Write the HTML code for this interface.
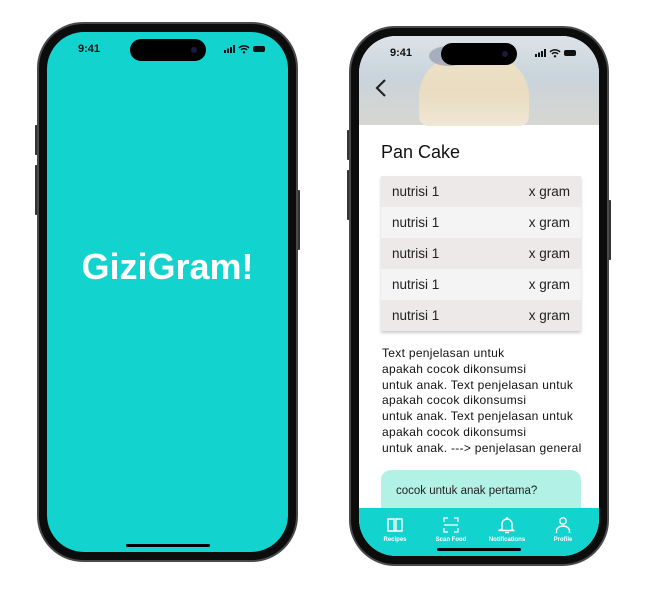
<!DOCTYPE html>
<html><head><style>
*{margin:0;padding:0;box-sizing:border-box}
body{width:654px;height:589px;background:#fff;position:relative;overflow:hidden;font-family:"Liberation Sans",sans-serif}
.ph{position:absolute;border-radius:46px;background:#0c0c0c;border:2px solid #4a4a4a;padding:8px}
.scr{position:relative;width:100%;height:100%;border-radius:37px;overflow:hidden}
.isl{position:absolute;top:7px;left:50%;margin-left:-38px;width:76px;height:22px;background:#000;border-radius:12px}
.isl:after{content:"";position:absolute;right:9px;top:8px;width:6px;height:6px;border-radius:50%;background:#1a1a40}
.time{position:absolute;top:11px;left:31px;font-size:11px;font-weight:bold;color:#111}
.st{position:absolute;top:12px;right:22px;width:42px;height:10px}
.home{position:absolute;bottom:5px;left:50%;margin-left:-42px;width:84px;height:3px;background:#000;border-radius:2px}
.btn{position:absolute;background:#333;width:3px;border-radius:1px}
.row{height:31px;display:flex;justify-content:space-between;align-items:center;padding:0 11px;font-size:13.5px;color:#222}
.nav{position:absolute;left:0;right:0;bottom:0;height:48px;background:#12D3CE;display:flex;justify-content:space-around;padding:8px 8px 0}
.it{display:flex;flex-direction:column;align-items:center;color:#fff;font-size:6px;font-weight:bold;width:52px}
.it svg{width:18px;height:18px;margin-bottom:3px}
</style></head><body>
<div class="btn" style="left:35px;top:125px;height:30px"></div>
<div class="btn" style="left:35px;top:165px;height:50px"></div>
<div class="btn" style="left:297px;top:190px;height:60px"></div>
<div class="ph" style="left:37px;top:22px;width:261px;height:540px">
 <div class="scr" style="background:#12D3CE">
  <div class="isl"></div>
  <div class="time">9:41</div>
  <svg class="st" viewBox="0 0 42 10"><rect x="0" y="6" width="2" height="3" fill="#111"/><rect x="3" y="4.5" width="2" height="4.5" fill="#111"/><rect x="6" y="3" width="2" height="6" fill="#111"/><rect x="9" y="1" width="2" height="8" fill="#111"/><path d="M15 4 A7 7 0 0 1 25 4 M17 6 A4 4 0 0 1 23 6" stroke="#111" stroke-width="1.5" fill="none"/><circle cx="20" cy="8.3" r="1.2" fill="#111"/><rect x="29" y="2" width="12" height="6" rx="2" fill="#111"/></svg>
  <div style="position:absolute;top:214px;left:0;right:0;text-align:center;color:#fff;font-size:36px;font-weight:bold">GiziGram!</div>
  <div class="home"></div>
 </div>
</div>
<div class="btn" style="left:347px;top:130px;height:30px"></div>
<div class="btn" style="left:347px;top:170px;height:50px"></div>
<div class="btn" style="left:608px;top:200px;height:60px"></div>
<div class="ph" style="left:349px;top:26px;width:260px;height:540px">
 <div class="scr" style="background:#fff">
  <div style="position:absolute;top:0;left:0;right:0;height:89px;background:linear-gradient(180deg,#dde3e8 0%,#c9d4dc 45%,#d7d6d0 100%)">
   <div style="position:absolute;left:60px;top:20px;width:110px;height:70px;border-radius:40px 40px 10px 10px;background:linear-gradient(180deg,#ece1c8,#e9dcc0 50%,#efe6d4)"></div>
   <div style="position:absolute;left:70px;top:10px;width:40px;height:20px;border-radius:50%;background:#8890a8;opacity:.6"></div>
  </div>
  <svg style="position:absolute;left:16px;top:42px" width="12" height="20" viewBox="0 0 12 20"><path d="M10 2 L2 10 L10 18" stroke="#222" stroke-width="2.2" fill="none"/></svg>
  <div class="isl"></div>
  <div class="time">9:41</div>
  <svg class="st" viewBox="0 0 42 10"><rect x="0" y="6" width="2" height="3" fill="#111"/><rect x="3" y="4.5" width="2" height="4.5" fill="#111"/><rect x="6" y="3" width="2" height="6" fill="#111"/><rect x="9" y="1" width="2" height="8" fill="#111"/><path d="M15 4 A7 7 0 0 1 25 4 M17 6 A4 4 0 0 1 23 6" stroke="#111" stroke-width="1.5" fill="none"/><circle cx="20" cy="8.3" r="1.2" fill="#111"/><rect x="29" y="2" width="12" height="6" rx="2" fill="#111"/></svg>
  <div style="position:absolute;left:22px;top:106px;font-size:18px;color:#111">Pan Cake</div>
  <div style="position:absolute;left:22px;top:140px;width:200px;box-shadow:0 2px 3px rgba(0,0,0,.2)">
   <div class="row" style="background:#ECE9E8"><span>nutrisi 1</span><span>x gram</span></div>
   <div class="row" style="background:#F4F4F4"><span>nutrisi 1</span><span>x gram</span></div>
   <div class="row" style="background:#ECE9E8"><span>nutrisi 1</span><span>x gram</span></div>
   <div class="row" style="background:#F4F4F4"><span>nutrisi 1</span><span>x gram</span></div>
   <div class="row" style="background:#ECE9E8"><span>nutrisi 1</span><span>x gram</span></div>
  </div>
  <div style="position:absolute;left:23px;top:310px;width:230px;font-size:12px;letter-spacing:0.3px;line-height:15.8px;color:#111">Text penjelasan untuk<br>apakah cocok dikonsumsi<br>untuk anak. Text penjelasan untuk<br>apakah cocok dikonsumsi<br>untuk anak. Text penjelasan untuk<br>apakah cocok dikonsumsi<br>untuk anak. ---&gt; penjelasan general</div>
  <div style="position:absolute;left:22px;top:434px;width:200px;height:60px;background:#B2F2E6;border-radius:10px;padding:15px 15px;font-size:11.5px;color:#222">cocok untuk anak pertama?</div>
  <div class="nav">
   <div class="it"><svg viewBox="0 0 18 18" fill="none" stroke="#fff" stroke-width="1.4"><path d="M2 3h6v12H2z M10 3h6v12h-6z M8 15h2"/></svg>Recipes</div>
   <div class="it"><svg viewBox="0 0 18 18" fill="none" stroke="#fff" stroke-width="1.2"><path d="M2 6V2h4 M12 2h4v4 M16 12v4h-4 M6 16H2v-4 M2 9h14"/></svg>Scan Food</div>
   <div class="it"><svg viewBox="0 0 18 18" fill="none" stroke="#fff" stroke-width="1.4"><path d="M4 13V8a5 5 0 0 1 10 0v5l1.5 1.5h-15z M7 16.5h4 M9 1v2"/></svg>Notifications</div>
   <div class="it"><svg viewBox="0 0 18 18" fill="none" stroke="#fff" stroke-width="1.4"><circle cx="9" cy="5" r="3.2"/><path d="M2.5 17v-2a6.5 5 0 0 1 13 0v2"/></svg>Profile</div>
  </div>
  <div class="home"></div>
 </div>
</div>
</body></html>
